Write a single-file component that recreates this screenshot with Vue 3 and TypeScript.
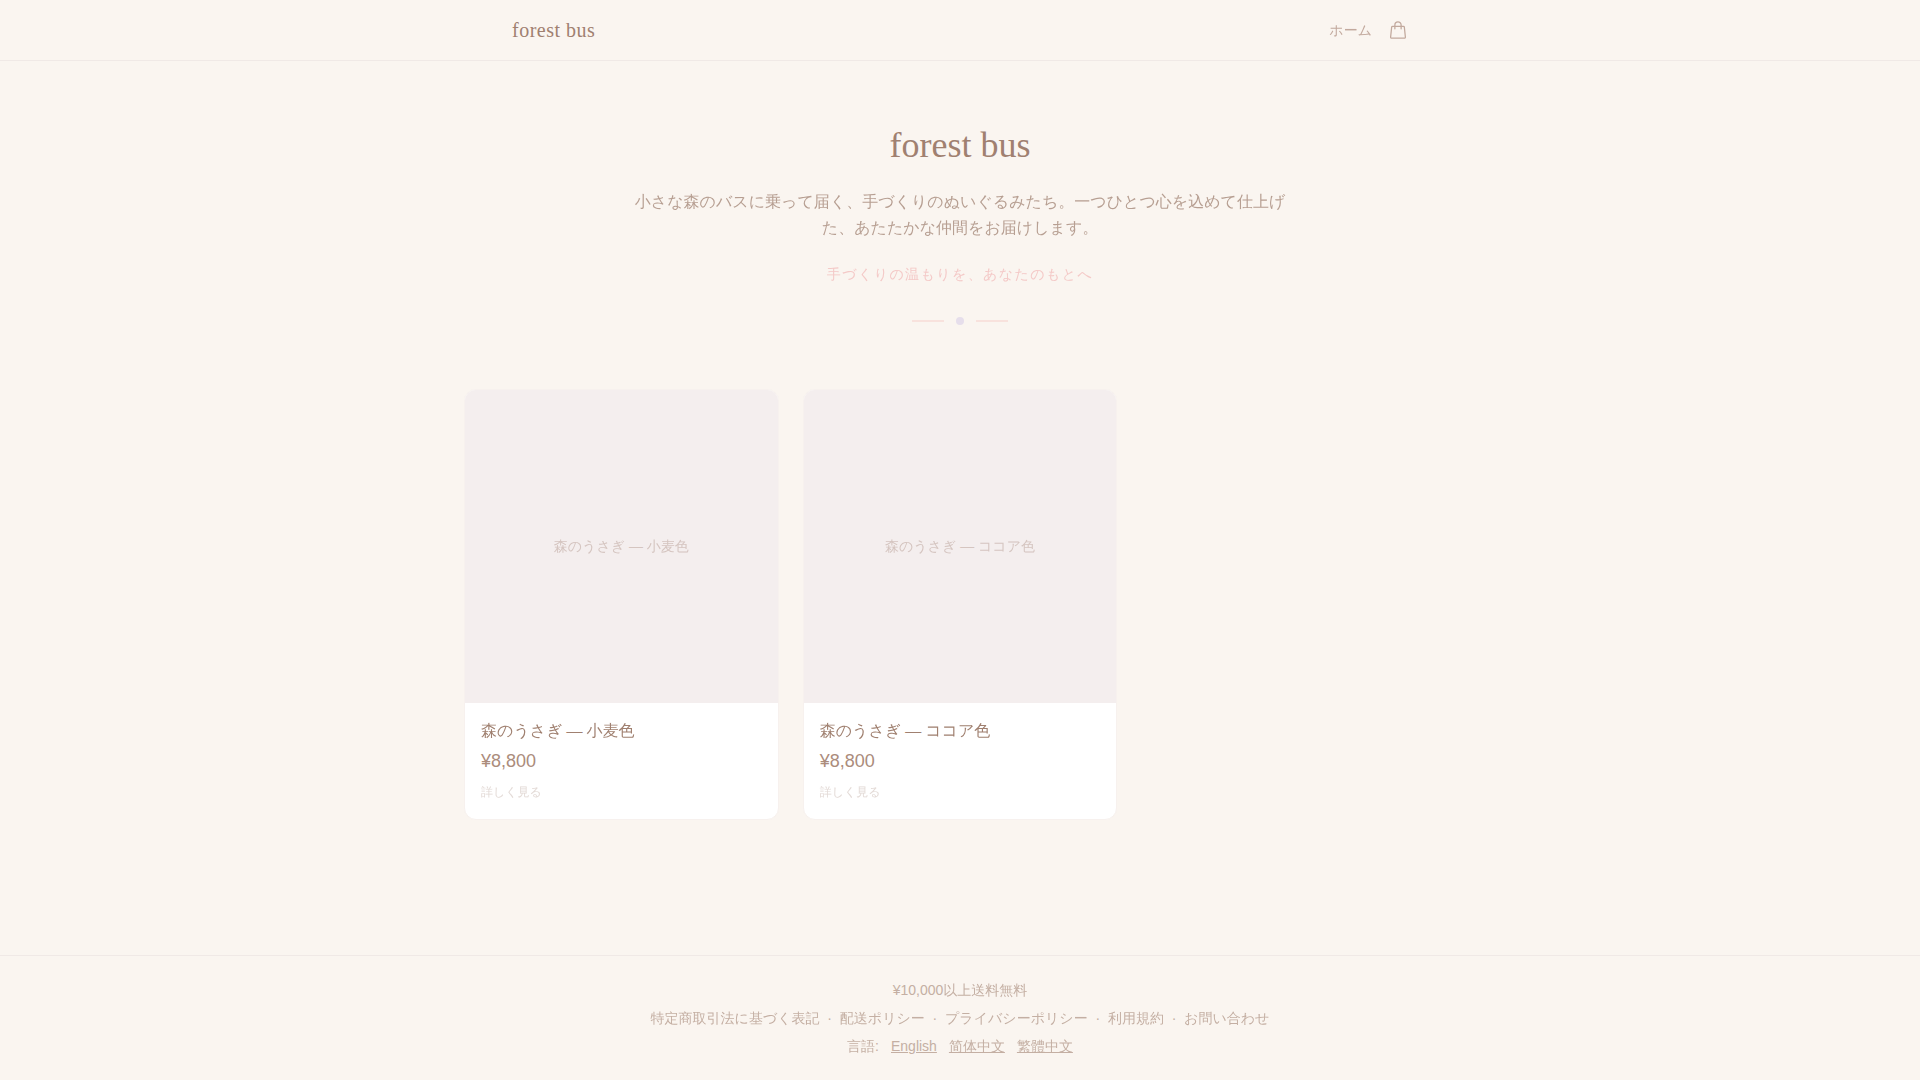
<script setup lang="ts">
interface Product {
  id: number
  name: string
  price: string
}

interface FooterLink {
  label: string
  href: string
}

const products: Product[] = [
  { id: 1, name: '森のうさぎ — 小麦色', price: '¥8,800' },
  { id: 2, name: '森のうさぎ — ココア色', price: '¥8,800' },
]

const policies: FooterLink[] = [
  { label: '特定商取引法に基づく表記', href: '#legal' },
  { label: '配送ポリシー', href: '#shipping' },
  { label: 'プライバシーポリシー', href: '#privacy' },
  { label: '利用規約', href: '#terms' },
  { label: 'お問い合わせ', href: '#contact' },
]

const languages = [
  { code: 'en', label: 'English' },
  { code: 'zh-Hans', label: '简体中文' },
  { code: 'zh-Hant', label: '繁體中文' },
]
</script>

<template>
  <div class="page">
    <header class="site-header">
      <div class="header-inner">
        <a class="logo" href="#">forest bus</a>
        <nav class="nav">
          <a class="nav-link" href="#">ホーム</a>
          <a class="cart" href="#cart" aria-label="カート">
            <svg viewBox="0 0 24 24" width="20" height="20" fill="none" stroke="currentColor" stroke-width="1.5" stroke-linecap="round" stroke-linejoin="round" aria-hidden="true">
              <path d="M15.75 10.5V6a3.75 3.75 0 1 0-7.5 0v4.5m11.356-1.993 1.263 12c.07.665-.45 1.243-1.119 1.243H4.25a1.125 1.125 0 0 1-1.12-1.243l1.264-12A1.125 1.125 0 0 1 5.513 7.5h12.974c.576 0 1.059.435 1.119 1.007Z" />
            </svg>
          </a>
        </nav>
      </div>
    </header>

    <main class="main">
      <section class="hero">
        <h1 class="hero-title">forest bus</h1>
        <p class="hero-text">小さな森のバスに乗って届く、手づくりのぬいぐるみたち。一つひとつ心を込めて仕上げた、あたたかな仲間をお届けします。</p>
        <p class="tagline">手づくりの温もりを、あなたのもとへ</p>
        <div class="divider" aria-hidden="true">
          <span class="line"></span>
          <span class="dot"></span>
          <span class="line"></span>
        </div>
      </section>

      <section class="products">
        <a v-for="p in products" :key="p.id" class="card" :href="`#product-${p.id}`">
          <div class="photo">{{ p.name }}</div>
          <div class="card-body">
            <h2 class="name">{{ p.name }}</h2>
            <p class="price">{{ p.price }}</p>
            <p class="more">詳しく見る</p>
          </div>
        </a>
      </section>
    </main>

    <footer class="site-footer">
      <p>¥10,000以上送料無料</p>
      <nav>
        <template v-for="(l, i) in policies" :key="l.href">
          <span v-if="i > 0">&nbsp; · &nbsp;</span><a :href="l.href">{{ l.label }}</a>
        </template>
      </nav>
      <div class="languages">
        <span>言語:</span>
        <a v-for="l in languages" :key="l.code" :href="`#${l.code}`">{{ l.label }}</a>
      </div>
    </footer>
  </div>
</template>

<style>
body {
  margin: 0;
  background: #faf5f0;
}
</style>

<style scoped>
.page {
  display: flex;
  flex-direction: column;
  min-height: 100vh;
  color: #a08070;
  font-family: "Liberation Sans", "WenQuanYi Zen Hei", sans-serif;
  font-size: 16px;
}

.page * {
  box-sizing: border-box;
}

a {
  color: inherit;
  text-decoration: none;
}

h1,
h2,
p {
  margin: 0;
  font-weight: 400;
}

.site-header {
  border-bottom: 1px solid #f0e9e6;
}

.header-inner {
  display: flex;
  align-items: center;
  justify-content: space-between;
  max-width: 896px;
  height: 60px;
  margin: 0 auto;
}

.logo {
  font-family: "Liberation Serif", serif;
  font-size: 20px;
  line-height: 28px;
  letter-spacing: 0.025em;
}

.nav {
  display: flex;
  align-items: center;
  gap: 16px;
  color: #c2a99d;
  font-size: 14px;
  line-height: 20px;
}

.cart {
  display: flex;
}

.main {
  flex: 1;
  width: 100%;
  max-width: 992px;
  margin: 0 auto;
  padding: 64px 0;
}

.hero {
  display: flex;
  flex-direction: column;
  align-items: center;
  margin-bottom: 64px;
  text-align: center;
}

.hero-title {
  font-family: "Liberation Serif", serif;
  font-size: 36px;
  line-height: 40px;
}

.hero-text {
  max-width: 672px;
  margin-top: 24px;
  color: #b79f92;
  line-height: 26px;
}

.tagline {
  margin-top: 24px;
  color: #f4c9c7;
  font-size: 14px;
  line-height: 18px;
  letter-spacing: 0.1em;
}

.divider {
  display: flex;
  align-items: center;
  gap: 12px;
  margin-top: 34px;
}

.line {
  width: 32px;
  height: 2px;
  background: #f8e2dd;
}

.dot {
  width: 8px;
  height: 8px;
  border-radius: 50%;
  background: #e6deeb;
}

.products {
  display: grid;
  grid-template-columns: repeat(3, 1fr);
  gap: 24px;
}

.card {
  overflow: hidden;
  border: 1px solid #f7f1ee;
  border-radius: 12px;
  background: #fff;
}

.photo {
  display: flex;
  align-items: center;
  justify-content: center;
  aspect-ratio: 1;
  background: #f4eeee;
  color: #d5c5c0;
  font-size: 14px;
  line-height: 20px;
}

.card-body {
  padding: 16px 16px 18px;
}

.name {
  font-family: "Liberation Serif", "WenQuanYi Zen Hei", serif;
  font-size: 16px;
  line-height: 24px;
}

.price {
  margin-top: 4px;
  color: #ab8c7c;
  font-size: 18px;
  line-height: 28px;
}

.more {
  margin-top: 8px;
  color: #e3dad6;
  font-size: 12px;
  line-height: 18px;
}

.site-footer {
  padding: 20px 24px;
  border-top: 1px solid #f0e9e6;
  color: #c4afa3;
  font-size: 14px;
  line-height: 28px;
  text-align: center;
}

.languages {
  display: flex;
  justify-content: center;
  gap: 12px;
}

.languages a {
  text-decoration: underline;
}
</style>
